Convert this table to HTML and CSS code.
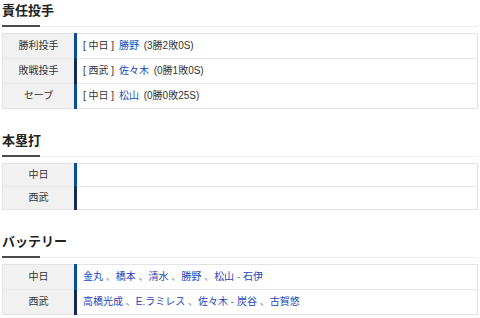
FILE: index.html
```html
<!DOCTYPE html>
<html lang="ja">
<head>
<meta charset="utf-8">
<link rel="stylesheet" href="styles.css">
</head>
<body>
<section class="sec">
  <h2 class="ttl">責任投手</h2>
  <table class="tbl">
    <tr><th class="lbl">勝利投手</th><td class="val d">[ 中日 ] <a class="lnk pit">勝野</a> (3勝2敗0S)</td></tr>
    <tr><th class="lbl">敗戦投手</th><td class="val l">[ 西武 ] <a class="lnk pit">佐々木</a> (0勝1敗0S)</td></tr>
    <tr><th class="lbl">セーブ</th><td class="val d">[ 中日 ] <a class="lnk pit">松山</a> (0勝0敗25S)</td></tr>
  </table>
</section>
<section class="sec">
  <h2 class="ttl">本塁打</h2>
  <table class="tbl">
    <tr><th class="lbl">中日</th><td class="val d empty"></td></tr>
    <tr><th class="lbl">西武</th><td class="val l empty"></td></tr>
  </table>
</section>
<section class="sec">
  <h2 class="ttl">バッテリー</h2>
  <table class="tbl">
    <tr><th class="lbl">中日</th><td class="val d"><a class="lnk">金丸</a><span class="sep"> 、</span><a class="lnk">橋本</a><span class="sep"> 、</span><a class="lnk">清水</a><span class="sep"> 、</span><a class="lnk">勝野</a><span class="sep"> 、</span><a class="lnk">松山</a><span class="sep"> - </span><a class="lnk">石伊</a></td></tr>
    <tr><th class="lbl">西武</th><td class="val l"><a class="lnk">高橋光成</a><span class="sep"> 、</span><a class="lnk">E.ラミレス</a><span class="sep"> 、</span><a class="lnk">佐々木</a><span class="sep"> - </span><a class="lnk">炭谷</a><span class="sep"> 、</span><a class="lnk">古賀悠</a></td></tr>
  </table>
</section>
</body>
</html>
```

FILE: styles.css
```css
html, body {
  margin: 0;
  padding: 0;
  background: #fff;
}
body {
  padding: 0 2px;
  font-family: "Liberation Sans", "Noto Sans CJK JP", sans-serif;
  color: #333;
}
.sec {
  margin-bottom: 21px;
}
.sec:last-child {
  margin-bottom: 0;
}
.ttl {
  position: relative;
  margin: 0;
  height: 22px;
  padding-bottom: 4px;
  font-size: 13px;
  line-height: 22px;
  font-weight: bold;
  color: #222;
  border-bottom: 1px solid #eee;
}
.ttl::after {
  content: "";
  position: absolute;
  left: 0;
  bottom: -1px;
  width: 38px;
  height: 2px;
  background: #4a4a4a;
}
.tbl {
  margin-top: 6px;
  width: 100%;
  border-collapse: collapse;
  border: 1px solid #e3e3e3;
}
.tbl tr + tr .lbl,
.tbl tr + tr .val {
  border-top: 1px solid #e8e8e8;
}
.lbl {
  width: 71px;
  padding: 4px 0;
  background: #f1f1f1;
  font-size: 10px;
  line-height: 14px;
  font-weight: normal;
  color: #333;
  text-align: center;
  border-right: 1px solid #e3e3e3;
}
.val {
  padding: 4px 6px;
  font-size: 10px;
  line-height: 16px;
  text-align: left;
  color: #333;
}
.val.empty {
  line-height: 14px;
}
.val.d {
  border-left: 3px solid #0b4c97;
}
.val.l {
  border-left: 3px solid #132b52;
}
.lnk {
  color: #1d46b6;
  text-decoration: none;
}
.lnk.pit {
  margin: 0 2px;
}
.sep {
  color: #6a7ab8;
}
```
